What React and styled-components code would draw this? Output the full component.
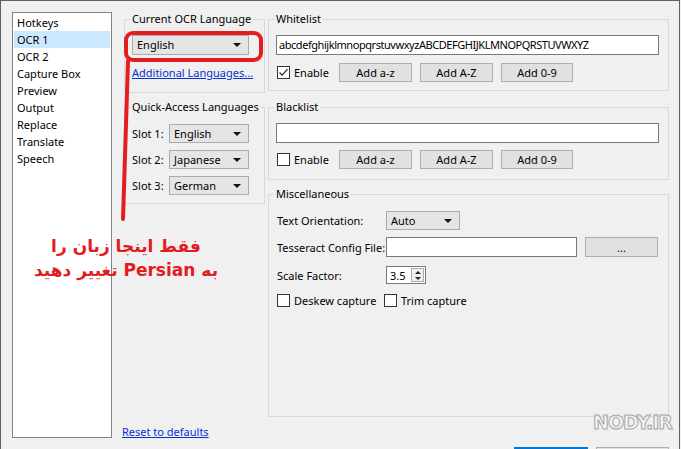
import React from 'react'
import styled, { createGlobalStyle } from 'styled-components'

const GlobalStyle = createGlobalStyle`
  html, body {
    margin: 0;
    background: #f0f0f0;
  }
  body {
    font-family: 'Noto Sans', 'DejaVu Sans', sans-serif;
    font-size: 11px;
    color: #000;
  }
  * { box-sizing: border-box; }
`

const pages = ['Hotkeys', 'OCR 1', 'OCR 2', 'Capture Box', 'Preview', 'Output', 'Replace', 'Translate', 'Speech']
const slots = [['Slot 1:', 'English'], ['Slot 2:', 'Japanese'], ['Slot 3:', 'German']]

function CheckBox({ checked }) {
  return (
    <Box>
      {checked && (
        <svg width="11" height="11" viewBox="0 0 11 11">
          <path d="M1.5 5.5 L4.2 8.2 L9.5 2.2" fill="none" stroke="#222" strokeWidth="1.2" />
        </svg>
      )}
    </Box>
  )
}

function CharButtons() {
  return (
    <>
      <Button>Add a-z</Button>
      <Button>Add A-Z</Button>
      <Button $w={72}>Add 0-9</Button>
    </>
  )
}

function App() {
  return (
    <>
      <GlobalStyle />
      <Window>
        <Main>
          <NavList>
            {pages.map(p => (
              <NavItem key={p} $active={p === 'OCR 1'}>{p}</NavItem>
            ))}
          </NavList>

          <Content>
            <Columns>
              <Column>
                <Group $pt={9} $pb={12}>
                  <Legend>Current OCR Language</Legend>
                  <Select $w={117} $h={20}>English</Select>
                  <Link $mt={11}>Additional Languages...</Link>
                </Group>

                <Group $mt={7} $pt={10} $pb={8}>
                  <Legend>Quick-Access Languages</Legend>
                  <Stack $gap={7}>
                    {slots.map(([label, lang]) => (
                      <Row key={label}>
                        <SlotLabel>{label}</SlotLabel>
                        <Select $w={80} $h={19}>{lang}</Select>
                      </Row>
                    ))}
                  </Stack>
                </Group>
              </Column>

              <Column $fill>
                <Group $pt={9} $pb={8} $pr={9}>
                  <Legend>Whitelist</Legend>
                  <TextField $tight>abcdefghijklmnopqrstuvwxyzABCDEFGHIJKLMNOPQRSTUVWXYZ</TextField>
                  <Row $mt={8}>
                    <CheckLabel $w={62}><CheckBox checked />Enable</CheckLabel>
                    <CharButtons />
                  </Row>
                </Group>

                <Group $mt={9} $pt={9} $pb={10} $pr={9}>
                  <Legend>Blacklist</Legend>
                  <TextField />
                  <Row $mt={7}>
                    <CheckLabel $w={62}><CheckBox />Enable</CheckLabel>
                    <CharButtons />
                  </Row>
                </Group>

                <Group $mt={7} $pt={10} $pb={8} $pr={10} $grow>
                  <Legend>Miscellaneous</Legend>
                  <Row>
                    <FieldLabel>Text Orientation:</FieldLabel>
                    <Select $w={74} $h={19}>Auto</Select>
                  </Row>
                  <Row $mt={7}>
                    <FieldLabel>Tesseract Config File:</FieldLabel>
                    <TextField $w={191} />
                    <Button $w={73} $h={20}>...</Button>
                  </Row>
                  <Row $mt={9}>
                    <FieldLabel>Scale Factor:</FieldLabel>
                    <Spin>
                      <span>3.5</span>
                      <SpinArrows>
                        <i />
                        <i />
                      </SpinArrows>
                    </Spin>
                  </Row>
                  <Row $mt={9}>
                    <CheckLabel $w={106}><CheckBox />Deskew capture</CheckLabel>
                    <CheckLabel><CheckBox />Trim capture</CheckLabel>
                  </Row>
                </Group>
              </Column>
            </Columns>

            <ResetLink>Reset to defaults</ResetLink>
          </Content>
        </Main>

        <ButtonBar>
          <Button $w={74} $h={23} $primary aria-label="OK" />
          <Button $w={73} $h={23} aria-label="Cancel" />
        </ButtonBar>

        <Frame />
        <Pointer width="681" height="449">
          <path d="M127 60 L122 218" stroke="#e41e20" strokeWidth="4" strokeLinecap="round" fill="none" />
        </Pointer>
        <Note>
          <div>فقط اینجا زبان را</div>
          <div>به Persian تغییر دهید</div>
        </Note>
        <Watermark>NODY.IR</Watermark>
      </Window>
    </>
  )
}

const Window = styled.div`
  position: relative;
  width: 680px;
  height: 449px;
  overflow: hidden;
  border: 1px solid #5f5f5f;
  border-bottom: none;
  padding: 11px 10px 0 11px;
  background: #f0f0f0;
`

const Main = styled.div`
  display: flex;
  gap: 12px;
`

const NavList = styled.ul`
  width: 100px;
  height: 426px;
  margin: 0;
  padding: 1px;
  list-style: none;
  background: #fff;
  border: 1px solid #828282;
`

const NavItem = styled.li`
  height: 17px;
  line-height: 17px;
  padding-left: 3px;
  background: ${p => (p.$active ? '#cce8ff' : 'transparent')};
`

const Content = styled.div`
  display: flex;
  flex-direction: column;
`

const Columns = styled.div`
  display: flex;
  gap: 3px;
  height: 405px;
  align-items: flex-start;
`

const Column = styled.div`
  display: flex;
  flex-direction: column;
  width: ${p => (p.$fill ? 401 : 141)}px;
  height: ${p => (p.$fill ? '100%' : 'auto')};
`

const Group = styled.fieldset`
  margin: ${p => p.$mt || 0}px 0 0;
  min-width: 0;
  border: 1px solid #d9d9d9;
  padding: ${p => p.$pt}px ${p => p.$pr || 8}px ${p => p.$pb}px 7px;
  display: flex;
  flex-direction: column;
  align-items: flex-start;
  flex: ${p => (p.$grow ? 1 : 'none')};
`

const Legend = styled.legend`
  line-height: 14px;
  padding: 0 2px;
  margin-left: -2px;
  white-space: nowrap;
`

const Stack = styled.div`
  display: flex;
  flex-direction: column;
  gap: ${p => p.$gap}px;
`

const Row = styled.div`
  display: flex;
  align-items: center;
  gap: 8px;
  margin-top: ${p => p.$mt || 0}px;
`

const Select = styled.div`
  position: relative;
  width: ${p => p.$w}px;
  height: ${p => p.$h}px;
  line-height: ${p => p.$h - 2}px;
  padding-left: 4px;
  background: #e5e5e5;
  border: 1px solid #acacac;

  &::after {
    content: '';
    position: absolute;
    right: 7px;
    top: 50%;
    margin-top: -2px;
    border-left: 4px solid transparent;
    border-right: 4px solid transparent;
    border-top: 4px solid #111;
  }
`

const Link = styled.a`
  margin-top: ${p => p.$mt || 0}px;
  line-height: 14px;
  color: #0a2fd0;
  text-decoration: underline;
  cursor: pointer;
`

const SlotLabel = styled.span`
  width: 29px;
  white-space: nowrap;
`

const TextField = styled.div`
  width: ${p => (p.$w ? `${p.$w}px` : '100%')};
  height: 20px;
  line-height: 18px;
  padding-left: 2px;
  background: #fff;
  border: 1px solid #7a7a7a;
  letter-spacing: ${p => (p.$tight ? '-0.45px' : 'normal')};
  white-space: nowrap;
  overflow: hidden;
`

const Box = styled.span`
  display: inline-flex;
  align-items: center;
  justify-content: center;
  flex: none;
  width: 13px;
  height: 13px;
  margin-right: 4px;
  background: #fff;
  border: 1px solid #333;
`

const CheckLabel = styled.label`
  display: flex;
  align-items: center;
  width: ${p => (p.$w ? `${p.$w}px` : 'auto')};
  margin-left: 1px;
  margin-right: -8px;
  white-space: nowrap;
`

const Button = styled.button`
  width: ${p => p.$w || 73}px;
  height: ${p => p.$h || 19}px;
  padding: 0;
  background: #e1e1e1;
  border: ${p => (p.$primary ? '2px solid #0078d7' : '1px solid #adadad')};
  font-family: inherit;
  font-size: 11px;
  color: #000;
`

const FieldLabel = styled.span`
  width: 101px;
  margin-left: 1px;
  white-space: nowrap;
`

const Spin = styled.div`
  display: flex;
  align-items: center;
  justify-content: space-between;
  width: 40px;
  height: 18px;
  padding: 0 1px 0 3px;
  background: #fff;
  border: 1px solid #7a7a7a;
`

const SpinArrows = styled.span`
  display: flex;
  flex-direction: column;
  justify-content: space-around;
  align-items: center;
  width: 13px;
  height: 14px;
  border: 1px solid #adadad;
  background: #f0f0f0;

  i {
    width: 0;
    height: 0;
    border-left: 3px solid transparent;
    border-right: 3px solid transparent;
  }
  i:first-child { border-bottom: 3px solid #222; }
  i:last-child { border-top: 3px solid #222; }
`

const ResetLink = styled(Link)`
  margin-top: 8px;
  margin-left: -2px;
`

const ButtonBar = styled.div`
  display: flex;
  justify-content: flex-end;
  gap: 8px;
  margin-top: 8px;
`

/* hand-drawn red markup on top of the dialog */
const Frame = styled.div`
  position: absolute;
  left: 123px;
  top: 30px;
  width: 139px;
  height: 31px;
  border: 4px solid #e41e20;
  border-radius: 9px;
`

const Pointer = styled.svg`
  position: absolute;
  left: 0;
  top: 0;
  pointer-events: none;
`

const Note = styled.div`
  position: absolute;
  left: 15px;
  top: 233px;
  width: 220px;
  direction: rtl;
  text-align: center;
  color: #e31d1f;
  font-family: 'DejaVu Sans', sans-serif;
  font-weight: bold;
  font-size: 17px;
  line-height: 24px;
`

const Watermark = styled.div`
  position: absolute;
  left: 592px;
  top: 410px;
  font-family: 'DejaVu Sans', sans-serif;
  font-weight: bold;
  font-size: 19px;
  color: rgba(255, 255, 255, 0.4);
  -webkit-text-stroke: 1px #a5a5a5;
  letter-spacing: -1px;
`

export default App
